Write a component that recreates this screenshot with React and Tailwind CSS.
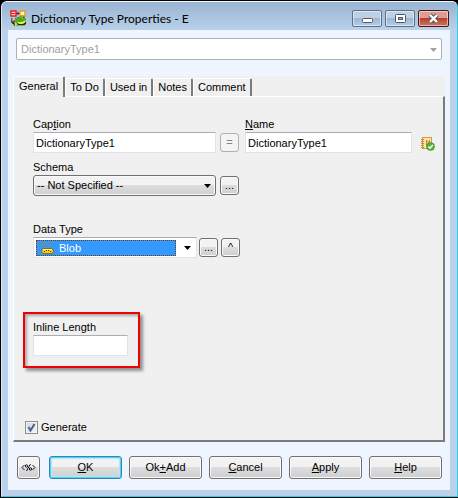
import React, { useState } from 'react';
import clsx from 'clsx';

const TABS = ['General', 'To Do', 'Used in', 'Notes', 'Comment'];

const fieldClass =
  'block h-[21px] w-full border border-[#e2e3ea] border-t-[#abadb3] bg-white px-[2px] text-[11px] text-black outline-none';

const faceClass =
  'flex items-center justify-center rounded-[3px] border bg-linear-to-b from-[#f2f2f2] from-45% via-[#dddddd] via-50% to-[#cfcfcf] text-[11px]';

const plainFace = 'border-[#707070] text-black shadow-[inset_0_0_0_1px_#fafafa]';
const primaryFace = 'border-[#3c7fb1] text-black shadow-[inset_0_0_0_1px_#46d8fb,inset_0_0_1px_2px_#b5e6f8]';

const Arrow = ({ className }) => (
  <svg className={className} width="7" height="4" viewBox="0 0 7 4" fill="currentColor" aria-hidden="true">
    <path d="M0 0h7L3.5 4z" />
  </svg>
);

const FrogIcon = () => (
  <svg width="17" height="17" viewBox="0 0 17 17" aria-hidden="true">
    <path d="M2 8h3l2 3v3l2 2h4l3-2v-3l-3-3H6" fill="#1c2a18" />
    <path d="M2 8v5M4 10v6M2 12l3 4" stroke="#1c1c1c" strokeWidth="1.2" />
    <path d="M3 8v3M5.5 12v4M2.5 14.5l1.5 1.5" stroke="#f3d53a" strokeWidth="1.1" />
    <path d="M6 3.5h4M8 2v3" stroke="#333" />
    <rect x="1" y="1" width="5" height="5" fill="#ffd9d2" stroke="#f01010" strokeWidth="1.4" />
    <path d="M2 3.5h3" stroke="#f01010" />
    <rect x="10" y="1" width="5" height="5" fill="#fff3c4" stroke="#f09a1c" strokeWidth="1.4" />
    <path d="M5 11c0-3 3-5 5-4 1-2 5-2 5 1 2 1 1 4-1 5-3 2-9 1-9-2z" fill="#4fa52a" />
    <path d="M7 11.5c3 1.5 6 .5 9-1.5 0 4-7 6-9 1.5z" fill="#f5ee3c" />
    <circle cx="12.5" cy="7.5" r="1" fill="#f5ee3c" />
    <path d="M12.5 7h1v1h-1z" fill="#111" />
    <path d="M6 15.5h9" stroke="#7dbb2c" strokeWidth="1.2" />
  </svg>
);

const BlobIcon = () => (
  <svg className="pointer-events-none absolute left-[7px] top-[4px]" width="13" height="13" viewBox="0 0 13 13" aria-hidden="true">
    <path d="M0 .5h11M0 2.5h11M0 4.5h11" stroke="#8a8a4a" strokeDasharray="1 1" />
    <rect x="0.5" y="6.5" width="12" height="5" rx="2.5" fill="#f0d21e" stroke="#8a6a10" />
    <path d="M2 7.5h9" stroke="#fff3a0" />
    <path d="M3 9.5h1M5 8.5h1M7 8.5h1M9 9.5h1" stroke="#4a3a00" />
  </svg>
);

const NameCheckIcon = () => (
  <svg width="15" height="15" viewBox="0 0 15 15" aria-hidden="true">
    <rect x="2.5" y="1.5" width="9" height="11" fill="#fbe3ae" stroke="#d99a3c" />
    <path d="M1 3.5h3M1 5.5h3M1 7.5h3M1 9.5h3M1 11.5h3" stroke="#c98a30" />
    <path d="M6.5 10V4.5L9.5 7V4" stroke="#c58324" fill="none" />
    <circle cx="10.5" cy="10.5" r="4" fill="#55b03a" stroke="#3c9028" strokeWidth="0.6" />
    <path d="M8.4 10.6l1.6 1.6 2.8-3.2" stroke="#fff" strokeWidth="1.4" fill="none" />
  </svg>
);

const captionButton =
  'flex h-[17px] items-center justify-center rounded-[2px] border shadow-[inset_0_0_0_1px_rgba(255,255,255,0.5)]';
const captionBlue = 'w-[30px] border-[#5a7089] bg-linear-to-b from-[#bdd0e5] from-45% via-[#9db8d4] via-50% to-[#b4cde4]';

const TitleBar = () => (
  <header className="flex h-[28px] shrink-0 items-center bg-linear-to-b from-[#99b4d1] to-[#b9d1ea] px-2 pt-[5px]">
    <FrogIcon />
    <h1 className="ml-1 flex-1 truncate font-['Lato',sans-serif] text-[12px] leading-4 text-black">
      Dictionary Type Properties - E
    </h1>
    <div className="flex gap-[3px]">
      <button aria-label="Minimize" className={clsx(captionButton, captionBlue)}>
        <svg className="mt-[3px]" width="11" height="5" viewBox="0 0 11 5">
          <rect x="0.5" y="0.5" width="10" height="4" rx="1" fill="#fff" stroke="#535666" />
        </svg>
      </button>
      <button aria-label="Restore" className={clsx(captionButton, captionBlue)}>
        <svg width="11" height="9" viewBox="0 0 11 9">
          <rect x="0.5" y="0.5" width="10" height="8" rx="1" fill="#fff" stroke="#535666" />
          <rect x="3.5" y="3.5" width="4" height="2" fill="#9db8d4" stroke="#535666" />
        </svg>
      </button>
      <button
        aria-label="Close"
        className={clsx(captionButton, 'w-[31px] border-[#4e1414] bg-linear-to-b from-[#dd9d92] from-45% via-[#b8402c] via-50% to-[#cc7460]')}
      >
        <svg width="13" height="11" viewBox="0 0 13 11">
          <path d="M3 2l7 7M10 2l-7 7" stroke="#535666" strokeWidth="4.4" />
          <path d="M3 2l7 7M10 2l-7 7" stroke="#fff" strokeWidth="2.4" />
        </svg>
      </button>
    </div>
  </header>
);

const TabStrip = ({ active, onSelect }) => (
  <div role="tablist" className="flex h-5 items-end">
    {TABS.map((tab) => (
      <button
        key={tab}
        role="tab"
        aria-selected={tab === active}
        onClick={() => onSelect(tab)}
        className={clsx(
          'relative whitespace-nowrap rounded-t-[2px] border-l border-r-2 border-t border-l-white border-r-[#7b7b7b] border-t-white bg-[#f0f0f0] text-[11px]',
          tab === active ? 'z-10 -mb-px h-[21px] px-[5px] pb-[2px]' : 'h-[18px] px-1'
        )}
      >
        {tab}
      </button>
    ))}
  </div>
);

const SmallButton = ({ children, className, disabled, ...props }) => (
  <button
    disabled={disabled}
    className={clsx(
      'mb-px h-[19px] w-[19px] shrink-0',
      faceClass,
      disabled ? 'border-[#adb2b5] text-[#838383] shadow-[inset_0_0_0_9px_#f4f4f4]' : plainFace,
      className
    )}
    {...props}
  >
    <span className="relative">{children}</span>
  </button>
);

const Label = ({ htmlFor, children }) => (
  <label htmlFor={htmlFor} className="block text-[11px] leading-4">
    {children}
  </label>
);

const GeneralPage = () => {
  const [caption, setCaption] = useState('DictionaryType1');
  const [name, setName] = useState('DictionaryType1');
  const [length, setLength] = useState('');
  const [generate, setGenerate] = useState(true);

  return (
    <div className="flex flex-1 flex-col pb-[5px] pl-[19px] pr-2 pt-[19px]">
      <div className="flex items-end">
        <div className="flex-[183]">
          <Label htmlFor="caption">Cap<u>t</u>ion</Label>
          <input id="caption" className={fieldClass} value={caption} onChange={(e) => setCaption(e.target.value)} />
        </div>
        <SmallButton aria-label="Copy caption" disabled className="ml-1 mr-[6px]">=</SmallButton>
        <div className="flex-[167]">
          <Label htmlFor="name"><u>N</u>ame</Label>
          <input id="name" className={fieldClass} value={name} onChange={(e) => setName(e.target.value)} />
        </div>
        <button aria-label="Check name" className="mb-[2px] ml-2">
          <NameCheckIcon />
        </button>
      </div>

      <div className="mt-[6px] flex items-end">
        <div className="w-[183px]">
          <Label htmlFor="schema">Schema</Label>
          <div className="relative">
            <select id="schema" className={clsx(faceClass, plainFace, 'h-[21px] w-full appearance-none px-[3px]')}>
              <option>-- Not Specified --</option>
            </select>
            <Arrow className="pointer-events-none absolute right-[5px] top-[9px]" />
          </div>
        </div>
        <SmallButton aria-label="Edit schema" className="ml-1">...</SmallButton>
      </div>

      <div className="mt-[25px] flex items-end">
        <div className="w-[164px]">
          <Label htmlFor="datatype">Data Type</Label>
          <div className="relative flex h-[21px] items-center border border-[#e2e3ea] border-t-[#abadb3] bg-white pl-[2px] pr-[5px]">
            <select
              id="datatype"
              className="h-4 flex-1 appearance-none border border-dotted border-[#7a3c00] bg-[#3399ff] pl-[22px] text-[11px] leading-3 text-white outline-none"
            >
              <option>Blob</option>
            </select>
            <BlobIcon />
            <Arrow className="ml-2" />
          </div>
        </div>
        <SmallButton aria-label="Edit data type" className="ml-[2px]">...</SmallButton>
        <SmallButton aria-label="Go up" className="ml-[3px]">^</SmallButton>
      </div>

      <div className="-ml-[10px] mt-[54px] w-[117px] border-2 border-[#f00000] pb-[10px] pl-2 pr-[10px] pt-[5px] shadow-[3px_3px_3px_rgba(0,0,0,0.4),inset_2px_2px_3px_rgba(0,0,0,0.3)]">
        <Label htmlFor="length">Inline Length</Label>
        <input id="length" className={fieldClass} value={length} onChange={(e) => setLength(e.target.value)} />
      </div>

      <label className="-ml-2 mt-auto flex items-center gap-[3px] self-start text-[11px] leading-4">
        <span className="relative flex size-[13px]">
          <input
            type="checkbox"
            checked={generate}
            onChange={(e) => setGenerate(e.target.checked)}
            className="size-[13px] appearance-none border border-[#8e8f8f] bg-linear-to-br from-[#cfd5dc] to-[#f6f6f6] shadow-[inset_0_0_0_1px_#f4f4f4]"
          />
          {generate && (
            <svg className="pointer-events-none absolute inset-0" width="13" height="13" viewBox="0 0 13 13">
              <path d="M3.5 6l2 3.5L9.5 3" stroke="#4a5f97" strokeWidth="2" fill="none" />
            </svg>
          )}
        </span>
        Generate
      </label>
    </div>
  );
};

const FooterButton = ({ primary, children }) => (
  <button className={clsx(faceClass, 'h-[23px] flex-1', primary ? primaryFace : plainFace)}>
    <span>{children}</span>
  </button>
);

export default function App() {
  const [tab, setTab] = useState('General');

  return (
    <div className="flex min-h-screen bg-black font-['Liberation_Sans',Arial,sans-serif] text-[11px] text-black">
      <div className="my-px ml-px flex flex-1 flex-col overflow-hidden rounded-t-[6px] border border-b-[#2ccfe8] border-l-[#dfe9f5] border-r-[#2ccfe8] border-t-[#f2f7fc] bg-[#b9d1ea]">
        <TitleBar />
        <main className="mb-[6px] ml-[6px] mr-[7px] flex flex-1 flex-col bg-[#eff5fe] px-[5px] pb-[11px] pt-2">
          <div className="relative mx-[3px]">
            <select
              disabled
              aria-label="Object"
              className="block h-[22px] w-full appearance-none rounded-[2px] border border-[#adb2b5] bg-white px-1 text-[11px] text-[#a0a0a0] opacity-100"
            >
              <option>DictionaryType1</option>
            </select>
            <Arrow className="pointer-events-none absolute right-[5px] top-[10px] text-[#a0a0a0]" />
          </div>

          <section className="mt-4 flex flex-1 flex-col bg-[#f0f0f0]">
            <TabStrip active={tab} onSelect={setTab} />
            <div
              role="tabpanel"
              aria-label={tab}
              className="flex flex-1 flex-col border-b-2 border-l border-r-2 border-t border-b-[#7b7b7b] border-l-white border-r-[#7b7b7b] border-t-white"
            >
              {tab === 'General' && <GeneralPage />}
            </div>
          </section>

          <footer className="ml-1 mr-[3px] mt-[14px] flex gap-[7px]">
            <button aria-label="Scripting" className={clsx(faceClass, plainFace, 'mr-[2px] h-[23px] w-[23px] shrink-0')}>
              <svg width="15" height="9" viewBox="0 0 15 9" fill="none" stroke="#111" aria-hidden="true">
                <path d="M3.5 2L1 4.5 3.5 7M11.5 2L14 4.5 11.5 7M9.5 1l-4 7" />
                <circle cx="5.5" cy="3" r="1.2" />
                <circle cx="9.5" cy="6" r="1.2" />
              </svg>
            </button>
            <FooterButton primary><u>O</u>K</FooterButton>
            <FooterButton>Ok<u>+</u>Add</FooterButton>
            <FooterButton><u>C</u>ancel</FooterButton>
            <FooterButton><u>A</u>pply</FooterButton>
            <FooterButton><u>H</u>elp</FooterButton>
          </footer>
        </main>
      </div>
    </div>
  );
}
